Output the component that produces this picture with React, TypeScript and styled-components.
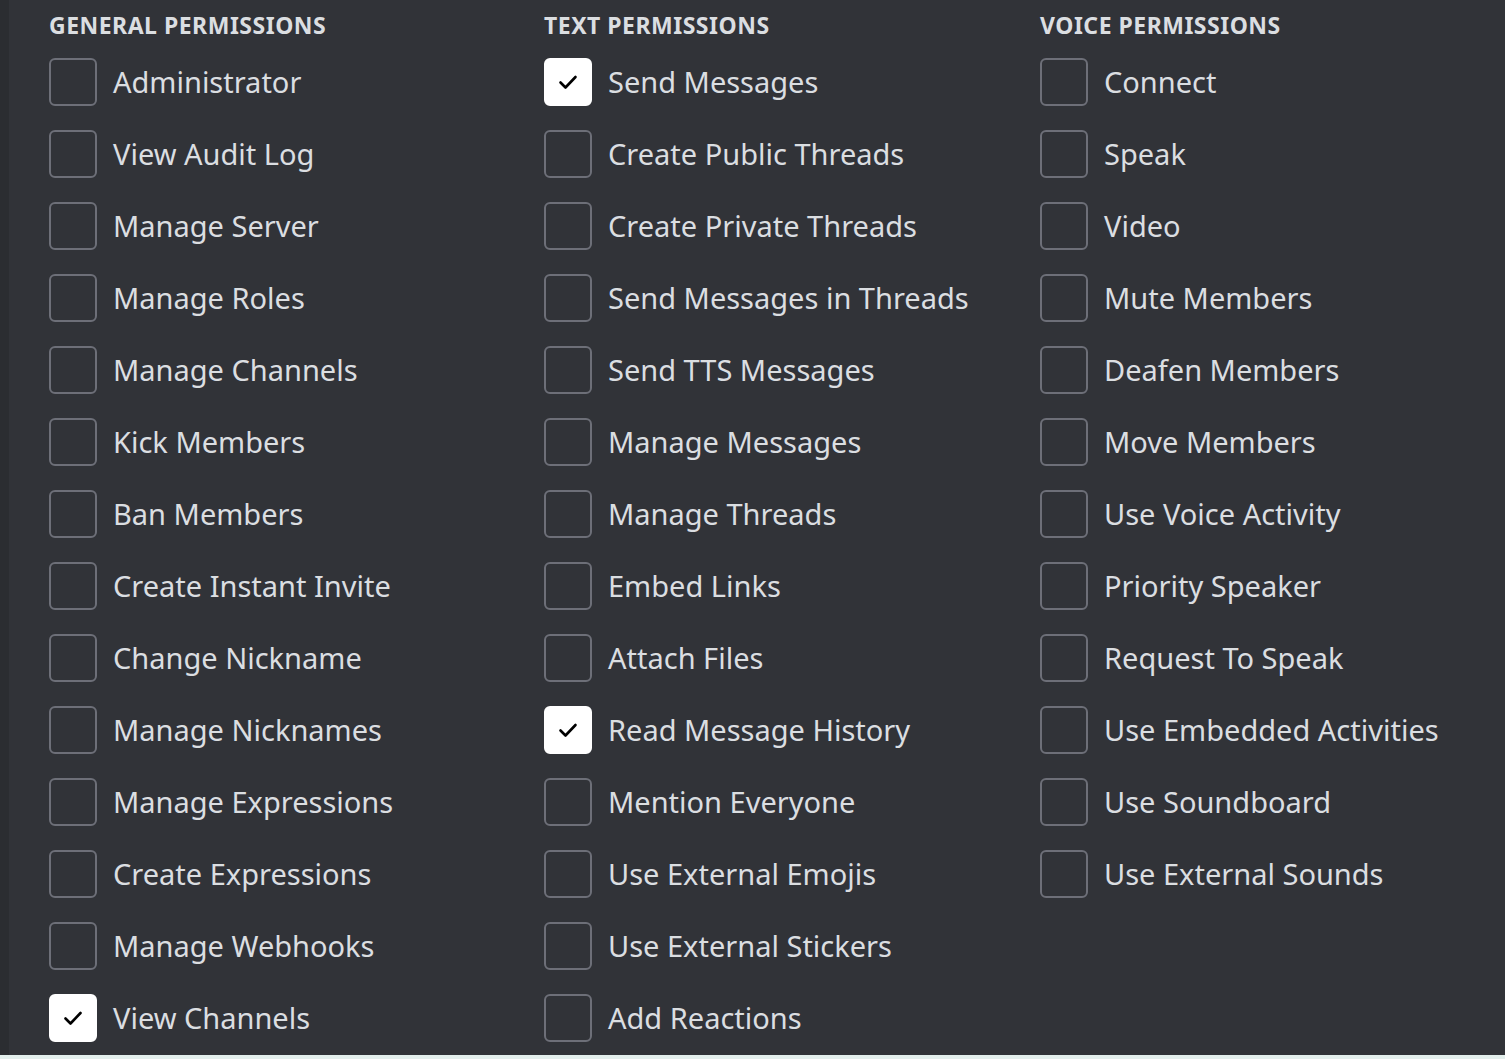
import React from "react";
import styled, { createGlobalStyle } from "styled-components";

const Global = createGlobalStyle`
  html, body { margin: 0; padding: 0; background: #313338; overflow: hidden; }
  #root { width: 1505px; height: 1059px; }
`;

const Page = styled.div`
  display: flex;
  flex-direction: column;
  width: 1505px;
  height: 1059px;
`;

const Body = styled.div`
  display: flex;
  flex: 1;
  min-height: 0;
`;

const SideStrip = styled.div`
  width: 9px;
  background: #2b2d31;
  flex-shrink: 0;
`;

const Main = styled.div`
  flex: 1;
  background: #313338;
  padding: 13px 0 0 40px;
  display: grid;
  grid-template-columns: 495px 496px 1fr;
  align-items: start;
`;

const BottomStrip = styled.div`
  height: 4px;
  background: #e3efec;
`;

const Column = styled.div`
  display: flex;
  flex-direction: column;
`;

const Header = styled.h2`
  margin: 0 0 21px 0;
  font-family: "Noto Sans", sans-serif;
  font-weight: 700;
  font-size: 23px;
  line-height: 24px;
  letter-spacing: 0.5px;
  text-transform: uppercase;
  color: #dbdee1;
`;

const List = styled.div`
  display: flex;
  flex-direction: column;
  gap: 24px;
`;

const Row = styled.label`
  display: flex;
  align-items: center;
  gap: 16px;
  height: 48px;
`;

const Box = styled.span<{ $checked: boolean }>`
  box-sizing: border-box;
  width: 48px;
  height: 48px;
  flex-shrink: 0;
  border-radius: 6px;
  border: 2px solid ${(p) => (p.$checked ? "#ffffff" : "#6d6f78")};
  background: ${(p) => (p.$checked ? "#ffffff" : "transparent")};
  display: flex;
  align-items: center;
  justify-content: center;
`;

const Label = styled.span`
  font-family: "Noto Sans", sans-serif;
  font-size: 29px;
  line-height: 36px;
  margin-top: -1px;
  font-weight: 400;
  color: #dbdee1;
  white-space: nowrap;
`;

const Check = () => (
  <svg width="24" height="24" viewBox="0 0 24 24" fill="none">
    <path d="M4.5 12.5 L9.5 17.5 L19.5 7" stroke="#000" strokeWidth="2.6" strokeLinecap="round" strokeLinejoin="round" />
  </svg>
);

type Perm = { name: string; checked?: boolean };

const columns: { title: string; items: Perm[] }[] = [
  {
    title: "General Permissions",
    items: [
      { name: "Administrator" },
      { name: "View Audit Log" },
      { name: "Manage Server" },
      { name: "Manage Roles" },
      { name: "Manage Channels" },
      { name: "Kick Members" },
      { name: "Ban Members" },
      { name: "Create Instant Invite" },
      { name: "Change Nickname" },
      { name: "Manage Nicknames" },
      { name: "Manage Expressions" },
      { name: "Create Expressions" },
      { name: "Manage Webhooks" },
      { name: "View Channels", checked: true },
    ],
  },
  {
    title: "Text Permissions",
    items: [
      { name: "Send Messages", checked: true },
      { name: "Create Public Threads" },
      { name: "Create Private Threads" },
      { name: "Send Messages in Threads" },
      { name: "Send TTS Messages" },
      { name: "Manage Messages" },
      { name: "Manage Threads" },
      { name: "Embed Links" },
      { name: "Attach Files" },
      { name: "Read Message History", checked: true },
      { name: "Mention Everyone" },
      { name: "Use External Emojis" },
      { name: "Use External Stickers" },
      { name: "Add Reactions" },
    ],
  },
  {
    title: "Voice Permissions",
    items: [
      { name: "Connect" },
      { name: "Speak" },
      { name: "Video" },
      { name: "Mute Members" },
      { name: "Deafen Members" },
      { name: "Move Members" },
      { name: "Use Voice Activity" },
      { name: "Priority Speaker" },
      { name: "Request To Speak" },
      { name: "Use Embedded Activities" },
      { name: "Use Soundboard" },
      { name: "Use External Sounds" },
    ],
  },
];

export default function App() {
  return (
    <>
      <Global />
      <Page>
        <Body>
          <SideStrip />
          <Main>
            {columns.map((col) => (
              <Column key={col.title}>
                <Header>{col.title}</Header>
                <List>
                  {col.items.map((it) => (
                    <Row key={it.name}>
                      <Box $checked={!!it.checked}>{it.checked && <Check />}</Box>
                      <Label>{it.name}</Label>
                    </Row>
                  ))}
                </List>
              </Column>
            ))}
          </Main>
        </Body>
        <BottomStrip />
      </Page>
    </>
  );
}
